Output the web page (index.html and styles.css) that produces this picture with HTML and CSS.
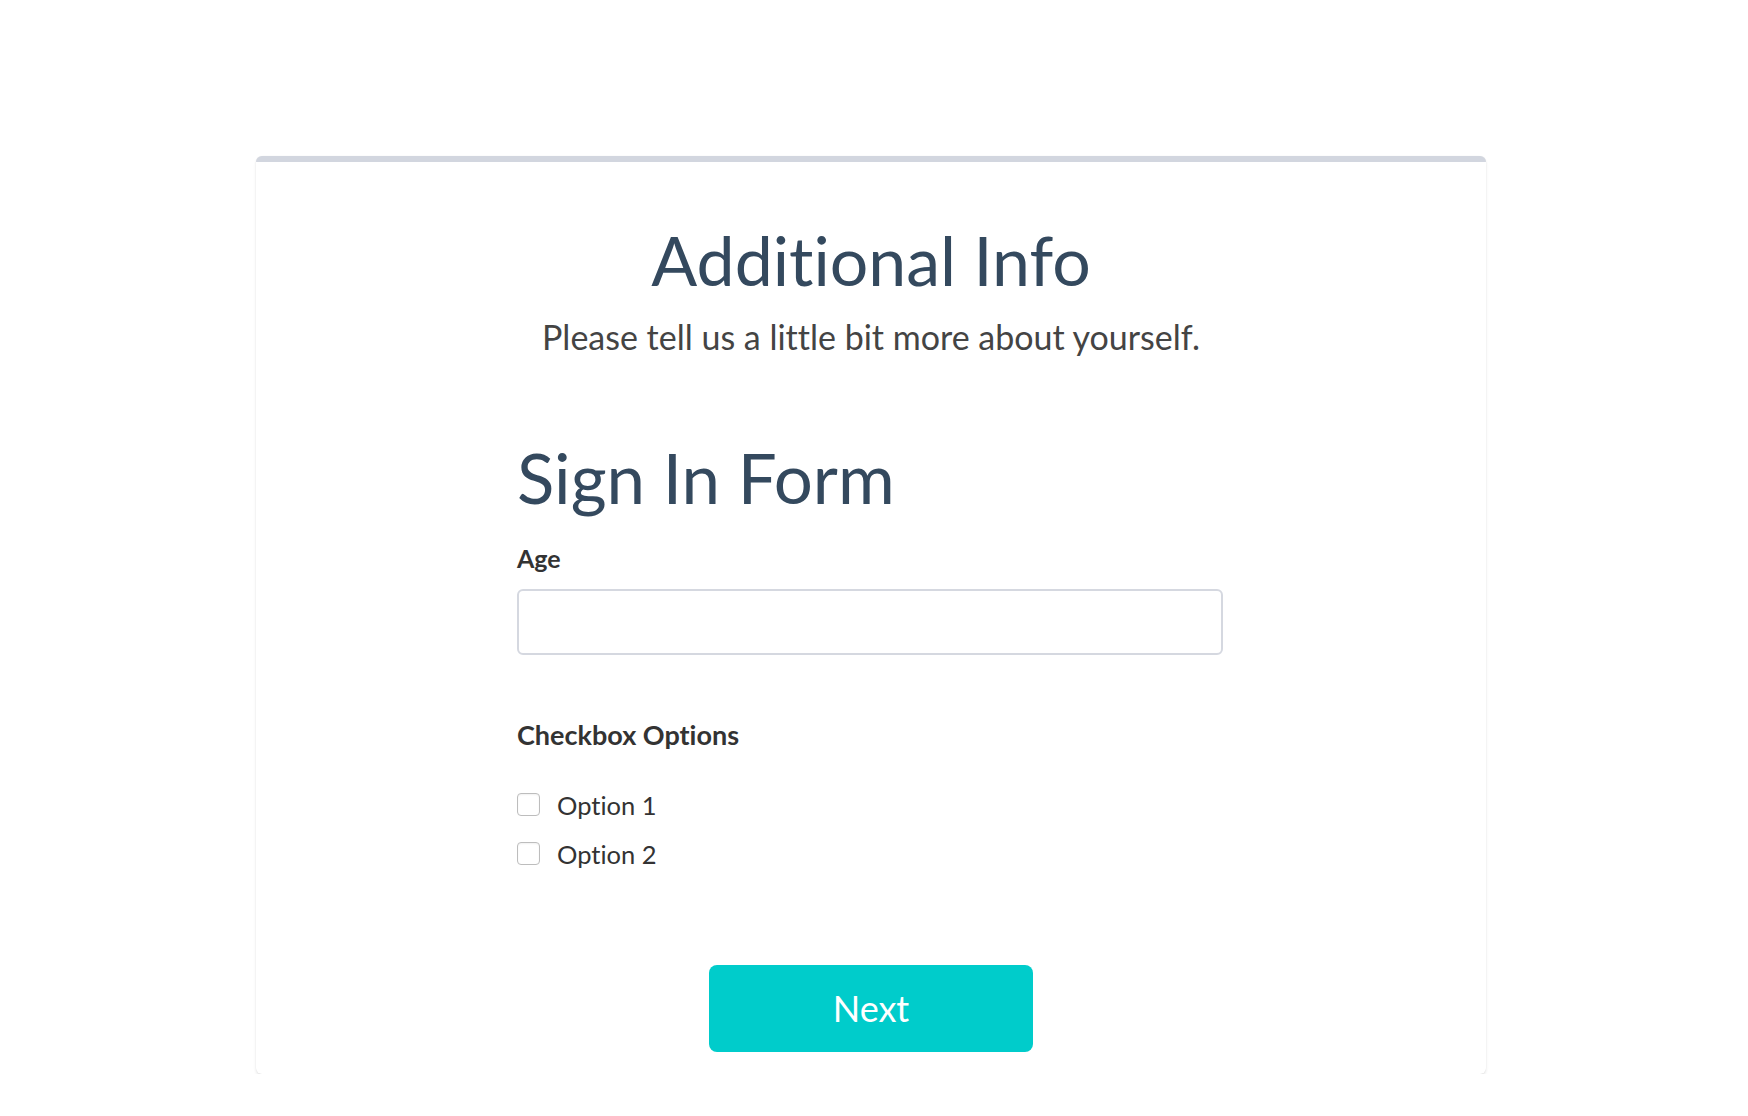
FILE: index.html
```html
<!DOCTYPE html>
<html lang="en">
<head>
<meta charset="utf-8">
<title>Additional Info</title>
<link rel="stylesheet" href="styles.css">
</head>
<body>
<div class="page">
  <div class="card">
    <h1 class="title">Additional Info</h1>
    <p class="subtitle">Please tell us a little bit more about yourself.</p>
    <form class="form">
      <h2 class="form-title">Sign In Form</h2>
      <label class="label" for="age">Age</label>
      <input class="input" id="age" type="text">
      <div class="label group-label">Checkbox Options</div>
      <div class="options">
        <label class="option"><span class="box"></span><span class="option-text">Option 1</span></label>
        <label class="option"><span class="box"></span><span class="option-text">Option 2</span></label>
      </div>
    </form>
    <div class="actions">
      <button class="btn" type="button">Next</button>
    </div>
  </div>
</div>
</body>
</html>
```
FILE: styles.css
```css
* { box-sizing: border-box; }
html, body { margin: 0; padding: 0; background: #ffffff; }
body {
  font-family: Lato, "Open Sans", sans-serif;
  font-variant-ligatures: none;
}
.page { padding: 156px 0 0 256px; }
.card {
  width: 1230px;
  height: 918px;
  background: #fff;
  border-top: 6px solid #d2d6df;
  border-radius: 6px;
  box-shadow: 0 2px 3px rgba(0,0,0,0.10), 0 0 1px rgba(0,0,0,0.08);
  padding-top: 57px;
  display: flex;
  flex-direction: column;
}
.title {
  margin: 0;
  text-align: center;
  font-weight: 400;
  font-size: 68px;
  line-height: 1.2;
  color: #34495e;
}
.subtitle {
  margin: 16px 0 0;
  text-align: center;
  font-size: 34px;
  line-height: 1.2;
  color: #444444;
}
.form {
  width: 706px;
  margin: 80px 0 0 261px;
  display: flex;
  flex-direction: column;
}
.form-title {
  margin: 0;
  font-weight: 400;
  font-size: 69px;
  line-height: 1.2;
  color: #34495e;
}
.label {
  font-weight: 700;
  font-size: 25px;
  line-height: 1.2;
  color: #333333;
}
.form-title + .label { margin-top: 23px; }
.input {
  margin-top: 16px;
  height: 66px;
  width: 706px;
  border: 2px solid #d5d8e0;
  border-radius: 6px;
  background: #fff;
  font: inherit;
  outline: none;
}
.group-label {
  margin-top: 64px;
  font-size: 27px;
}
.options {
  margin-top: 38px;
  display: flex;
  flex-direction: column;
  gap: 17px;
}
.option {
  display: flex;
  align-items: center;
  height: 32px;
}
.box {
  width: 23px;
  height: 23px;
  border: 1.5px solid #bdbdbd;
  border-radius: 4px;
  background: #fff;
  box-shadow: inset 0 1px 2px rgba(0,0,0,0.06);
  flex: none;
  margin-top: -3px;
}
.option-text {
  margin-left: 17px;
  font-size: 25.5px;
  line-height: 1.2;
  color: #333333;
}
.actions {
  margin-top: 94px;
  display: flex;
  justify-content: center;
}
.btn {
  width: 324px;
  height: 87px;
  border: none;
  border-radius: 8px;
  background: #00cccb;
  color: #ffffff;
  font-family: Lato, sans-serif;
  font-size: 36px;
  cursor: pointer;
}
```
